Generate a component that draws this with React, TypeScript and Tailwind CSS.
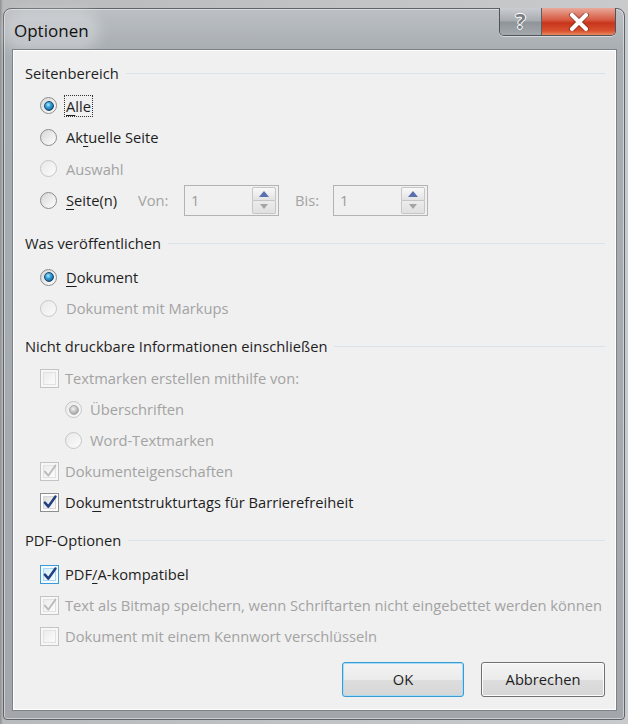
import React from "react";

const U = ({ children }: { children: React.ReactNode }) => (
  <span className="underline decoration-1 underline-offset-[3px]">{children}</span>
);

function Radio({ checked = false, disabled = false }: { checked?: boolean; disabled?: boolean }) {
  return (
    <span
      className={
        disabled
          ? "w-[17px] h-[17px] shrink-0 rounded-full border border-[#c6c6c6] bg-[linear-gradient(135deg,#e9e9e9,#fbfbfb)] flex items-center justify-center"
          : "w-[17px] h-[17px] shrink-0 rounded-full border border-[#8a8c8e] bg-[linear-gradient(135deg,#d6d6d6,#ffffff)] flex items-center justify-center"
      }
    >
      {checked && !disabled && (
        <span className="block w-[10px] h-[10px] rounded-full border border-[#1d4766] bg-[radial-gradient(circle_at_40%_35%,#b6ecff_0%,#38a6e0_35%,#0f5f92_80%)]" />
      )}
      {checked && disabled && (
        <span className="block w-[10px] h-[10px] rounded-full border border-[#a9a9a9] bg-[radial-gradient(circle_at_40%_35%,#f4f4f4_0%,#c4c4c4_45%,#9c9c9c_85%)]" />
      )}
    </span>
  );
}

function Check({ checked = false, disabled = false, focus = false }: { checked?: boolean; disabled?: boolean; focus?: boolean }) {
  const box = focus
    ? "block w-[19px] h-[19px] shrink-0 border border-[#3c9ad6] bg-[#f4fbff] p-[2px]"
    : disabled
    ? "block w-[19px] h-[19px] shrink-0 border border-[#c4c4c4] bg-[#f7f7f7] p-[2px]"
    : "block w-[19px] h-[19px] shrink-0 border border-[#8e8f8f] bg-[#ffffff] p-[2px]";
  const inner = focus
    ? "block w-full h-full border border-[#a9d8f3] bg-[linear-gradient(135deg,#d5eefc,#f7fcff)] relative"
    : disabled
    ? "block w-full h-full border border-[#e2e2e2] bg-[linear-gradient(135deg,#ececec,#fbfbfb)] relative"
    : "block w-full h-full border border-[#d6d6d6] bg-[linear-gradient(135deg,#dedede,#fafafa)] relative";
  return (
    <span className={box}>
      <span className={inner}>
        {checked && (
          <svg viewBox="0 0 14 14" className="absolute left-[-2px] top-[-3px] w-[16px] h-[16px]">
            <path
              d="M2.5 7.5 L5.6 11 L11.8 2.2"
              fill="none"
              stroke={disabled ? "#b9b9b9" : "#21407f"}
              strokeWidth={disabled ? 1.6 : 2.2}
              strokeLinecap="round"
              strokeLinejoin="round"
            />
          </svg>
        )}
      </span>
    </span>
  );
}

function Header({ title }: { title: string }) {
  return (
    <div className="h-[34px] flex items-center pl-[11px] pr-[10px] text-[#1e1e1e]">
      <span className="whitespace-nowrap">{title}</span>
      <span className="flex-1 h-px bg-[#dbe3e8] ml-[7px] mt-[1px]" />
    </div>
  );
}

function Row({
  children,
  indent = "pl-[26px]",
  h = "h-[31px]",
}: {
  children: React.ReactNode;
  indent?: string;
  h?: string;
}) {
  return <div className={`${h} flex items-center ${indent}`}>{children}</div>;
}

function Spin() {
  return (
    <div className="w-[95px] h-[31px] border border-[#b3b3b3] bg-[#f0f0f0] flex items-center pl-[6px] pr-[2px]">
      <span className="flex-1 text-[#9b9b9b]">1</span>
      <div className="w-[24px] h-[27px] flex flex-col">
        <div className="flex-1 border border-[#c6c6c6] rounded-t-[2px] bg-[linear-gradient(#f9f9f9,#e2e2e2)] flex items-center justify-center">
          <svg width="10" height="6" viewBox="0 0 10 6">
            <path d="M0 6 L5 0 L10 6 Z" fill="#5a6fae" />
          </svg>
        </div>
        <div className="flex-1 border border-t-0 border-[#c6c6c6] rounded-b-[2px] bg-[linear-gradient(#ececec,#e0e0e0)] flex items-center justify-center">
          <svg width="8" height="5" viewBox="0 0 8 5">
            <path d="M0 0 L4 5 L8 0 Z" fill="#a4a4a4" />
          </svg>
        </div>
      </div>
    </div>
  );
}

export default function App() {
  const dis = "text-[#a3a3a3]";
  const txt = "text-[#1e1e1e]";
  return (
    <div
      className="w-[628px] h-[724px] overflow-hidden bg-[linear-gradient(90deg,#8d8f91_0px,#b9babb_3px,#c9cacb_100%)] pt-[8px] pl-[3px]"
      style={{ fontFamily: '"Open Sans", "Noto Sans", sans-serif' }}
    >
      <div className="w-[622px] h-[712px] rounded-t-[8px] rounded-b-[4px] border border-[#5e6369] bg-[linear-gradient(180deg,#bcc0c4_0px,#a9aeb3_40px,#a3a7ab_100%)] flex flex-col shadow-[inset_0_0_0_1px_rgba(255,255,255,0.45)]">
        <div className="h-[41px] flex items-start justify-between pl-[10px] pr-[8px]">
          <div className="h-full flex items-center pt-[2px]">
            <span className="text-[17px] text-[#111] rounded-[14px] bg-[rgba(226,228,230,0.4)] shadow-[0_0_14px_10px_rgba(226,228,230,0.45)] leading-[22px]">
              Optionen
            </span>
          </div>
          <div className="flex h-[28px] mt-[-1px] rounded-b-[5px] border border-t-0 border-[#4f545a] overflow-hidden shadow-[0_1px_0_rgba(255,255,255,0.5)]">
            <div className="w-[42px] h-full border-r border-[#5a5f65] bg-[linear-gradient(180deg,#c9ccd0_0%,#a7abb0_48%,#8f9499_52%,#a4a9ae_100%)] flex items-center justify-center">
              <span
                className="text-[21px] font-bold text-[#7b7f84] leading-none"
                style={{ textShadow: "1px 0 0 #fff, -1px 0 0 #fff, 0 1px 0 #fff, 0 -1px 0 #fff" }}
              >
                ?
              </span>
            </div>
            <div className="w-[73px] h-full bg-[linear-gradient(180deg,#e9a99b_0%,#d6583f_45%,#c7351c_55%,#d9512f_85%,#e88a60_100%)] flex items-center justify-center">
              <svg width="22" height="18" viewBox="0 0 22 18">
                <path
                  d="M4 2 L18 16 M18 2 L4 16"
                  stroke="#5a1a10"
                  strokeWidth="6"
                  strokeLinecap="round"
                  opacity="0.45"
                />
                <path d="M4 2 L18 16 M18 2 L4 16" stroke="#ffffff" strokeWidth="4" strokeLinecap="round" />
              </svg>
            </div>
          </div>
        </div>
        <div className="ml-[9px] w-[603px] h-[660px] border border-white shadow-[0_0_0_1px_#7d8288] bg-[#f0f0f0] flex flex-col pt-[5px] text-[14.7px]">
          {/* Seitenbereich */}
          <Header title="Seitenbereich" />
          <Row h="h-[31.5px]">
            <Radio checked />
            <span className={`ml-[7px] ${txt} border border-dotted border-[#333] px-[1px] leading-[20px]`}>
              <U>A</U>lle
            </span>
          </Row>
          <Row h="h-[31.5px]">
            <Radio />
            <span className={`ml-[9px] ${txt}`}>
              Ak<U>t</U>uelle Seite
            </span>
          </Row>
          <Row h="h-[31.5px]">
            <Radio disabled />
            <span className={`ml-[9px] ${dis}`}>Auswahl</span>
          </Row>
          <Row h="h-[31.5px]">
            <Radio />
            <span className={`ml-[9px] w-[72px] ${txt}`}>
              <U>S</U>eite(n)
            </span>
            <span className={`${dis} w-[46px]`}>Von:</span>
            <Spin />
            <span className={`${dis} ml-[16px] w-[38px]`}>Bis:</span>
            <Spin />
          </Row>

          {/* Was veröffentlichen */}
          <div className="mt-[10px]">
            <Header title="Was veröffentlichen" />
          </div>
          <div className="pt-[1.5px]">
            <Row>
              <Radio checked />
              <span className={`ml-[9px] ${txt}`}>
                <U>D</U>okument
              </span>
            </Row>
            <Row>
              <Radio disabled />
              <span className={`ml-[9px] ${dis}`}>Dokument mit Markups</span>
            </Row>
          </div>

          {/* Nicht druckbare */}
          <div className="mt-[5.5px]">
            <Header title="Nicht druckbare Informationen einschließen" />
          </div>
          <Row>
            <Check disabled />
            <span className={`ml-[6px] ${dis}`}>Textmarken erstellen mithilfe von:</span>
          </Row>
          <Row indent="pl-[51px]">
            <Radio checked disabled />
            <span className={`ml-[8px] ${dis}`}>Überschriften</span>
          </Row>
          <Row indent="pl-[51px]">
            <Radio disabled />
            <span className={`ml-[8px] ${dis}`}>Word-Textmarken</span>
          </Row>
          <Row>
            <Check checked disabled />
            <span className={`ml-[6px] ${dis}`}>Dokumenteigenschaften</span>
          </Row>
          <Row>
            <Check checked />
            <span className={`ml-[6px] ${txt}`}>
              Dok<U>u</U>mentstrukturtags für Barrierefreiheit
            </span>
          </Row>

          {/* PDF-Optionen */}
          <div className="mt-[5px]">
            <Header title="PDF-Optionen" />
          </div>
          <div className="pt-[1.5px]">
            <Row>
              <Check checked focus />
              <span className={`ml-[6px] ${txt}`}>
                PDF<U>/</U>A-kompatibel
              </span>
            </Row>
            <Row>
              <Check checked disabled />
              <span className={`ml-[6px] ${dis} whitespace-nowrap`}>
                Text als Bitmap speichern, wenn Schriftarten nicht eingebettet werden können
              </span>
            </Row>
            <Row>
              <Check disabled />
              <span className={`ml-[6px] ${dis}`}>Dokument mit einem Kennwort verschlüsseln</span>
            </Row>
          </div>

          <div className="mt-[10px] flex justify-end gap-[17px] pr-[10px]">
            <button className="w-[122px] h-[35px] rounded-[3px] border border-[#3a9bd3] shadow-[inset_0_0_0_1px_#a6dcf5] bg-[linear-gradient(180deg,#f4f4f4_0%,#ebebeb_50%,#dddddd_51%,#d6d6d6_100%)] text-[#1e1e1e] text-[14.7px]">
              OK
            </button>
            <button className="w-[124px] h-[35px] rounded-[3px] border border-[#707070] shadow-[inset_0_0_0_1px_#fcfcfc] bg-[linear-gradient(180deg,#f4f4f4_0%,#ebebeb_50%,#dddddd_51%,#d6d6d6_100%)] text-[#1e1e1e] text-[14.7px]">
              Abbrechen
            </button>
          </div>
        </div>
      </div>
    </div>
  );
}
